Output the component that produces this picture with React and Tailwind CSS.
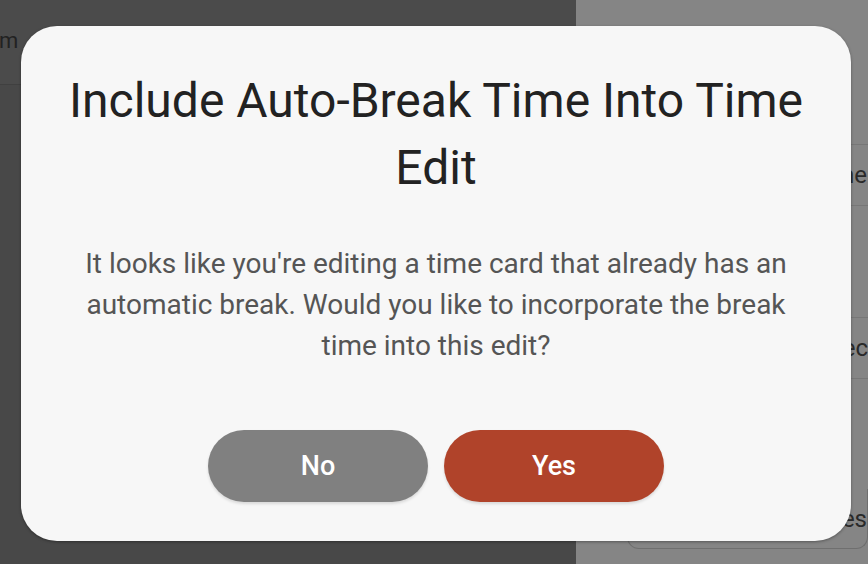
import React from "react";

const rows = [
  { text: "Time", top: "mt-[144px]", pr: "pr-[1px]" },
  { text: "Rec", top: "mt-[111px]", pr: "pr-0" },
];

export default function App() {
  return (
    <div
      className="relative flex h-[564px] w-[868px] overflow-hidden"
      style={{ fontFamily: "Roboto, 'Liberation Sans', sans-serif" }}
    >
      {/* page behind the overlay */}
      <div className="flex w-[576px] shrink-0 flex-col bg-[#484848]">
        <div className="flex h-[85px] items-center border-b border-[#404040] bg-[#4b4b4b] text-[22px] text-[#222]">
          <span className="-ml-[1px] pb-[4px]">m</span>
        </div>
      </div>
      <div className="flex min-w-0 flex-1 flex-col overflow-hidden bg-[#858585] text-[24px] text-[#2a2a2a]">
        {rows.map((r) => (
          <div
            key={r.text}
            className={`${r.top} ${r.pr} flex h-[62px] items-center justify-end border-y border-[#777] whitespace-nowrap`}
          >
            {r.text}
          </div>
        ))}
        <div className="ml-[51px] mt-[110px] flex h-[60px] items-center justify-end rounded-b-[12px] border-x border-b border-[#6f6f6f] whitespace-nowrap">
          Notes
        </div>
      </div>

      {/* dialog */}
      <div className="absolute left-[21px] top-[26px] flex h-[515px] w-[830px] flex-col items-center rounded-[36px] bg-[#f7f7f7] text-center shadow-[0_1px_3px_rgba(0,0,0,0.35)]">
        <h2 className="mt-[41px] px-[20px] text-[48px] leading-[67px] text-[#222]">
          Include Auto-Break Time Into Time Edit
        </h2>
        <p className="mt-[42px] w-[712px] text-[28px] leading-[41px] text-[#555]">
          It looks like you're editing a time card that already has an automatic break. Would you
          like to incorporate the break time into this edit?
        </p>
        <div className="mt-[64px] flex gap-[16px]">
          <button className="h-[72px] w-[220px] rounded-full bg-[#808080] text-[27px] font-medium text-white shadow-[0_2px_3px_rgba(0,0,0,0.12)]">
            No
          </button>
          <button className="h-[72px] w-[220px] rounded-full bg-[#b0432a] text-[27px] font-medium text-white shadow-[0_2px_3px_rgba(0,0,0,0.12)]">
            Yes
          </button>
        </div>
      </div>
    </div>
  );
}
